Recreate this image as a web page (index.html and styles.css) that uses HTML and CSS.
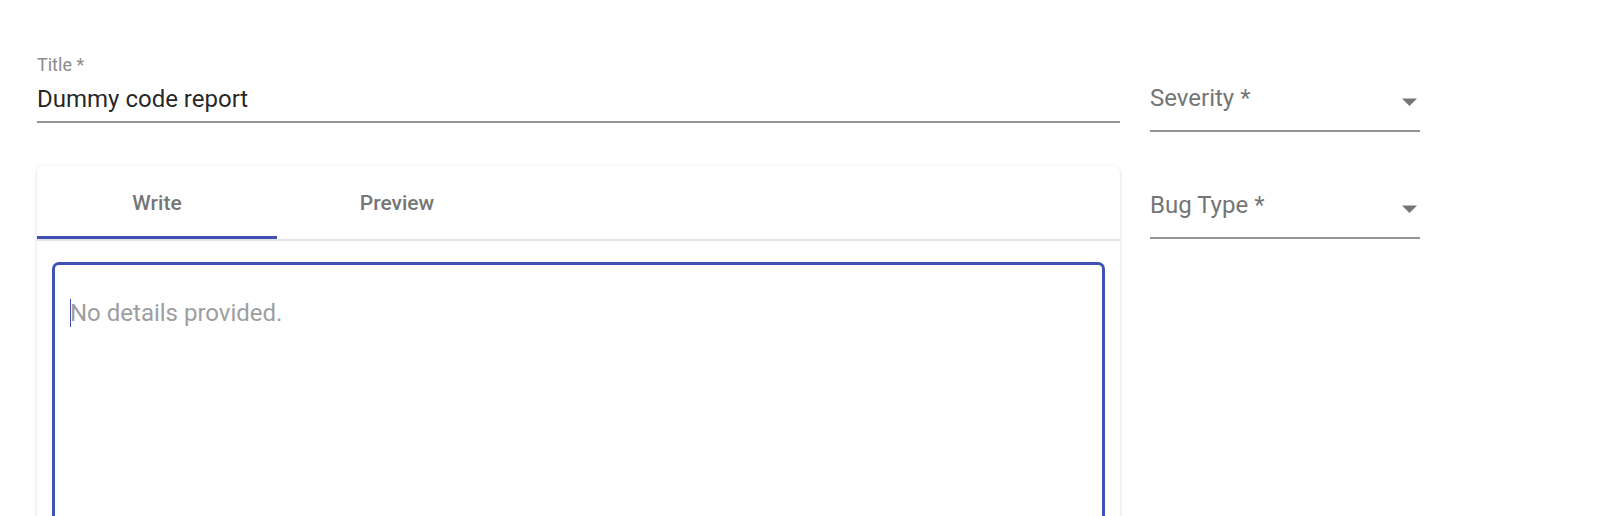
FILE: index.html
```html
<!DOCTYPE html>
<html lang="en">
<head>
<meta charset="utf-8">
<title>Report</title>
<link rel="stylesheet" href="styles.css">
</head>
<body>
<div class="page">
  <div class="main">
    <div class="text-field">
      <label class="field-label" for="title">Title *</label>
      <input id="title" class="field-input" type="text" value="Dummy code report">
    </div>
    <div class="card">
      <div class="tabs">
        <div class="tab tab-active">Write</div>
        <div class="tab">Preview</div>
      </div>
      <div class="card-body">
        <div class="editor">
          <textarea class="editor-input" placeholder="No details provided."></textarea>
        </div>
      </div>
    </div>
  </div>
  <div class="side">
    <div class="select">
      <span class="select-label">Severity *</span>
      <svg class="select-arrow" width="15" height="8" viewBox="0 0 15 8"><path d="M0 0.5h15L7.5 8z" fill="#757575"/></svg>
    </div>
    <div class="select select-second">
      <span class="select-label">Bug Type *</span>
      <svg class="select-arrow" width="15" height="8" viewBox="0 0 15 8"><path d="M0 0.5h15L7.5 8z" fill="#757575"/></svg>
    </div>
  </div>
</div>
</body>
</html>
```

FILE: styles.css
```css
html, body {
  margin: 0;
  padding: 0;
  overflow: hidden;
  background: #ffffff;
}

body {
  font-family: Roboto, "Liberation Sans", Arial, sans-serif;
  color: rgba(0, 0, 0, 0.87);
}

.page {
  display: flex;
  gap: 30px;
  padding: 56px 0 0 37px;
}

.main {
  width: 1083px;
  display: flex;
  flex-direction: column;
}

.text-field {
  display: flex;
  flex-direction: column;
}

.field-label {
  font-size: 18px;
  line-height: 18px;
  color: #8c8c8c;
  margin-bottom: 11px;
}

.field-input {
  font-family: inherit;
  font-size: 24px;
  line-height: 28px;
  height: 28px;
  padding: 0 0 8px 0;
  margin: 0;
  border: none;
  border-bottom: 2px solid #949494;
  outline: none;
  color: rgba(0, 0, 0, 0.87);
  background: transparent;
}

.card {
  margin-top: 43px;
  background: #fff;
  border-radius: 6px;
  box-shadow: 0 1px 2px -1px rgba(0, 0, 0, 0.2), 0 1px 2px rgba(0, 0, 0, 0.1), 0 1px 5px rgba(0, 0, 0, 0.08);
}

.tabs {
  display: flex;
  border-bottom: 2px solid #e4e4e4;
}

.tab {
  width: 240px;
  height: 73px;
  box-sizing: border-box;
  display: flex;
  align-items: center;
  justify-content: center;
  font-size: 21px;
  font-weight: 500;
  color: #767676;
  padding-top: 4px;
  border-bottom: 3px solid transparent;
}

.tab-active {
  border-bottom-color: #3f51b5;
}

.card-body {
  padding: 21px 15px 0 15px;
}

.editor {
  position: relative;
}

.editor::after {
  content: "";
  position: absolute;
  left: 18px;
  top: 37px;
  width: 1px;
  height: 28px;
  background: #3f51b5;
}

.editor-input {
  display: block;
  width: 100%;
  height: 320px;
  box-sizing: border-box;
  padding: 34px 15px;
  border: 3px solid #3f51b5;
  border-radius: 7px;
  font-family: inherit;
  font-size: 24px;
  line-height: 28px;
  resize: none;
  outline: none;
  color: rgba(0, 0, 0, 0.87);
}

.editor-input::placeholder {
  color: #9e9e9e;
  opacity: 1;
}

.side {
  width: 270px;
  display: flex;
  flex-direction: column;
}

.select {
  display: flex;
  align-items: flex-start;
  justify-content: space-between;
  padding: 28px 3px 18px 0;
  border-bottom: 2px solid #949494;
}

.select-second {
  margin-top: 31px;
}

.select-label {
  font-size: 24px;
  line-height: 28px;
  color: #757575;
}

.select-arrow {
  margin-top: 14px;
}
```
